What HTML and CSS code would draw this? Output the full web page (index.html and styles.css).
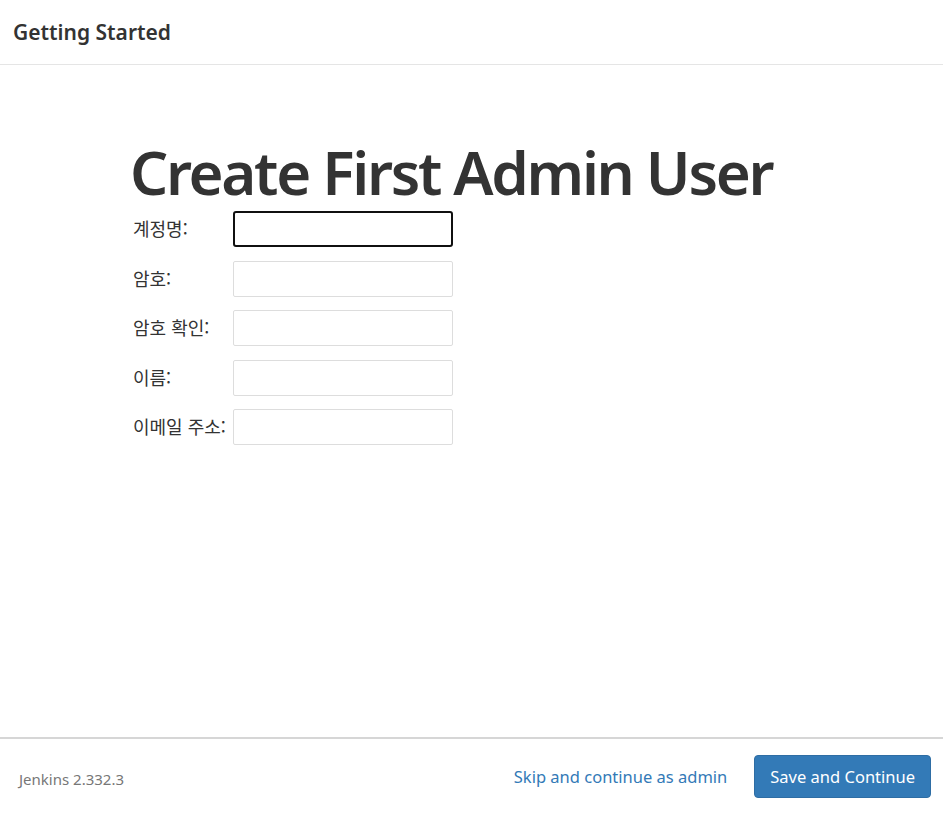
FILE: index.html
```html
<!DOCTYPE html>
<html lang="ko">
<head>
<meta charset="utf-8">
<title>Getting Started</title>
<link rel="stylesheet" href="styles.css">
</head>
<body>
<div class="page">
  <header class="header">
    <h3 class="title">Getting Started</h3>
  </header>
  <main class="content">
    <h1 class="heading">Create First Admin User</h1>
    <form class="form">
      <div class="row"><label class="label">계정명:</label><input class="input focused" type="text"></div>
      <div class="row"><label class="label">암호:</label><input class="input" type="password"></div>
      <div class="row"><label class="label">암호 확인:</label><input class="input" type="password"></div>
      <div class="row"><label class="label">이름:</label><input class="input" type="text"></div>
      <div class="row"><label class="label">이메일 주소:</label><input class="input" type="text"></div>
    </form>
  </main>
  <footer class="footer">
    <span class="version">Jenkins 2.332.3</span>
    <div class="actions">
      <a class="skip" href="#">Skip and continue as admin</a>
      <button class="save" type="button">Save and Continue</button>
    </div>
  </footer>
</div>
</body>
</html>
```
FILE: styles.css
```css
html, body {
  margin: 0;
  padding: 0;
  height: 100%;
  background: #fff;
}
body {
  font-family: "Noto Sans", "Noto Sans CJK KR", sans-serif;
  color: #333;
}
.page {
  display: flex;
  flex-direction: column;
  height: 814px;
}
.header {
  height: 65px;
  border-bottom: 1px solid #e5e5e5;
  display: flex;
  align-items: center;
  padding: 0 13px;
  box-sizing: border-box;
}
.title {
  margin: 0;
  font-size: 21px;
  font-weight: 600;
  color: #333;
}
.content {
  flex: 1;
  padding: 72px 0 0 130px;
}
.heading {
  margin: 0 0 4px 0;
  font-size: 60px;
  font-weight: 600;
  line-height: 70px;
  color: #333;
  letter-spacing: -2.3px;
}
.form {
  display: flex;
  flex-direction: column;
  gap: 13.5px;
  padding-left: 3px;
}
.row {
  display: flex;
  align-items: center;
  height: 36px;
}
.label {
  width: 100px;
  font-family: "Noto Sans CJK KR", sans-serif;
  font-size: 18px;
  font-weight: 400;
  color: #333;
  white-space: nowrap;
  margin-top: -2px;
}
.input {
  width: 220px;
  height: 36px;
  box-sizing: border-box;
  border: 1px solid #ddd;
  border-radius: 2px;
  padding: 4px 8px;
  font-size: 14px;
  outline: none;
  background: #fff;
}
.input.focused {
  border: 2px solid #101010;
  border-radius: 3px;
}
.footer {
  height: 77px;
  border-top: 2px solid #d6d6d6;
  box-sizing: border-box;
  display: flex;
  align-items: center;
  justify-content: space-between;
  padding: 0 12px 0 19px;
}
.version {
  font-size: 15px;
  color: #777;
  padding-top: 5px;
}
.actions {
  display: flex;
  align-items: center;
  gap: 27px;
}
.skip {
  color: #337ab7;
  font-size: 16.5px;
  text-decoration: none;
}
.save {
  background: #337ab7;
  color: #fff;
  border: 1px solid #2e6da4;
  border-radius: 4px;
  font-family: "Noto Sans", sans-serif;
  font-size: 16.5px;
  height: 43px;
  padding: 0 15px;
  cursor: pointer;
}
```
